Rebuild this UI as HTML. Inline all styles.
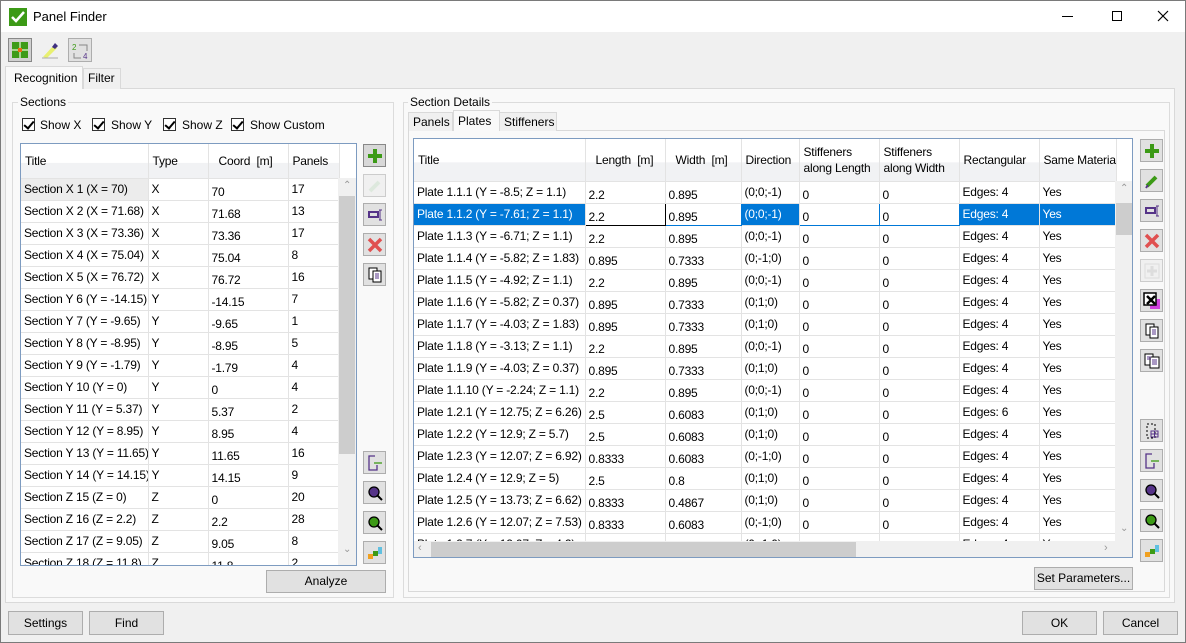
<!DOCTYPE html>
<html><head><meta charset="utf-8"><style>
*{box-sizing:border-box;margin:0;padding:0}
body{width:1186px;height:643px;overflow:hidden;background:#f0f0f0;font-family:"Liberation Sans",sans-serif;font-size:12px;color:#000;position:relative}
.a{position:absolute}
.title{position:absolute;left:0;top:0;width:1186px;height:32px;background:#fff;border:1px solid #7a7a7a;border-bottom:none}
.btn{position:absolute;background:#e1e1e1;border:1px solid #adadad;text-align:center;line-height:20px;font-size:12px}
.ib{position:absolute;width:23px;height:23px;background:#e1e1e1;border:1px solid #adadad}
.ib svg{position:absolute;left:2px;top:2px}
.grp{position:absolute;border:1px solid #dcdcdc}
.lbl{position:absolute;background:#f0f0f0;padding:0 2px}
table{border-collapse:collapse;table-layout:fixed;background:#fff}
td{border-right:1px solid #e3e3e3;border-bottom:1px solid #e3e3e3;height:22px;padding:0 0 0 3px;white-space:nowrap;overflow:hidden;vertical-align:middle;letter-spacing:-0.2px}
td.n{padding-top:5px}
th{font-weight:normal;text-align:left;padding-left:4px;border-right:1px solid #e3e3e3;border-bottom:1px solid #e3e3e3;background:linear-gradient(#fff 0,#fff 55%,#f1f2f4 56%,#f1f2f4 100%);white-space:nowrap;overflow:hidden;letter-spacing:-0.2px}
tr.sel td{background:#0078d7;color:#fff}
tr.sel td.ed{background:#fff;color:#000;border:1px solid #0078d7}
tr.sel td.ed1{background:#fff;color:#000;border:1px solid #000}
.cb{position:absolute;width:13px;height:13px;border:1px solid #333;background:#fff}
.cb:after{content:"";position:absolute;left:3px;top:0px;width:4px;height:8px;border:solid #000;border-width:0 2px 2px 0;transform:rotate(40deg)}
.vs{position:absolute;background:#f0f0f0}
.tab{position:absolute;border:1px solid #d9d9d9;border-bottom:none;background:#f0f0f0;padding-left:4px;line-height:18px}
</style></head><body>
<div class="title">
 <svg class="a" style="left:8px;top:7px" width="18" height="18"><rect width="18" height="18" fill="#3c9a16"/><path d="M3 9 L7 13 L15 4" stroke="#fff" stroke-width="2.5" fill="none"/></svg>
 <div class="a" style="left:32px;top:8px;font-size:13px">Panel Finder</div>
 <div class="a" style="left:1061px;top:15px;width:11px;border-top:1px solid #000"></div>
 <div class="a" style="left:1111px;top:10px;width:10px;height:10px;border:1px solid #000"></div>
 <svg class="a" style="left:1156px;top:9px" width="12" height="12"><path d="M1 1L11 11M11 1L1 11" stroke="#000" stroke-width="1.2"/></svg>
</div>
<div class="a" style="left:0;top:32px;width:1px;height:611px;background:#7a7a7a"></div>
<div class="a" style="left:1185px;top:32px;width:1px;height:611px;background:#7a7a7a"></div>
<div class="a" style="left:0;top:642px;width:1186px;height:1px;background:#7a7a7a"></div>

<div class="ib" style="left:8px;top:38px;width:24px;height:24px;background:#d0d0d0;border-color:#888"><svg width="18" height="18"><rect x="1" y="1" width="16" height="16" fill="#3c9a16"/><path d="M9 1V17M1 9H17" stroke="#c8e6b0" stroke-width="1.5"/><rect x="7" y="7" width="4" height="4" fill="#e86a10"/></svg></div>
<svg class="a" style="left:40px;top:40px" width="20" height="20"><path d="M3 17 L14 5 L17 8 L7 18Z" fill="#e8f070"/><path d="M12 7 L15 3 L18 6 L15 9Z" fill="#403080"/><path d="M2 18H18" stroke="#aaa"/></svg>
<div class="ib" style="left:68px;top:38px;width:24px;height:24px"><svg width="20" height="20"><text x="1" y="9" font-size="8" fill="#3c9a16" font-family="Liberation Sans">2</text><text x="12" y="18" font-size="8" fill="#553388" font-family="Liberation Sans">4</text><path d="M8 4H16V10M3 12V17H10" stroke="#888" fill="none"/></svg></div>

<div class="a" style="left:5px;top:88px;width:1170px;height:515px;border:1px solid #d9d9d9;background:#f9f9f9"></div>
<div class="tab" style="left:83px;top:68px;width:38px;height:21px;">Filter</div>
<div class="tab" style="left:5px;top:66px;width:78px;height:23px;background:#f9f9f9;border-color:#d9d9d9;line-height:22px;padding-left:8px">Recognition</div>

<div class="grp" style="left:12px;top:102px;width:382px;height:496px"></div>
<div class="lbl" style="left:18px;top:95px;background:#f9f9f9">Sections</div>
<div class="cb" style="left:22px;top:118px"></div><div class="a" style="left:40px;top:118px">Show X</div>
<div class="cb" style="left:92px;top:118px"></div><div class="a" style="left:111px;top:118px">Show Y</div>
<div class="cb" style="left:163px;top:118px"></div><div class="a" style="left:182px;top:118px">Show Z</div>
<div class="cb" style="left:231px;top:118px"></div><div class="a" style="left:250px;top:118px">Show Custom</div>

<div class="a" style="left:20px;top:143px;width:337px;height:423px;border:1px solid #7d9bc0;overflow:hidden;background:#fff">
<table style="width:318px">
<colgroup><col style="width:127px"><col style="width:60px"><col style="width:80px"><col style="width:51px"></colgroup>
<tr style="height:34px"><th>Title</th><th>Type</th><th style="padding-left:10px">Coord &nbsp;[m]</th><th>Panels</th></tr>
<tr><td style="background:#ececec">Section X 1 (X = 70)</td><td>X</td><td class="n">70</td><td>17</td></tr>
<tr><td>Section X 2 (X = 71.68)</td><td>X</td><td class="n">71.68</td><td>13</td></tr>
<tr><td>Section X 3 (X = 73.36)</td><td>X</td><td class="n">73.36</td><td>17</td></tr>
<tr><td>Section X 4 (X = 75.04)</td><td>X</td><td class="n">75.04</td><td>8</td></tr>
<tr><td>Section X 5 (X = 76.72)</td><td>X</td><td class="n">76.72</td><td>16</td></tr>
<tr><td>Section Y 6 (Y = -14.15)</td><td>Y</td><td class="n">-14.15</td><td>7</td></tr>
<tr><td>Section Y 7 (Y = -9.65)</td><td>Y</td><td class="n">-9.65</td><td>1</td></tr>
<tr><td>Section Y 8 (Y = -8.95)</td><td>Y</td><td class="n">-8.95</td><td>5</td></tr>
<tr><td>Section Y 9 (Y = -1.79)</td><td>Y</td><td class="n">-1.79</td><td>4</td></tr>
<tr><td>Section Y 10 (Y = 0)</td><td>Y</td><td class="n">0</td><td>4</td></tr>
<tr><td>Section Y 11 (Y = 5.37)</td><td>Y</td><td class="n">5.37</td><td>2</td></tr>
<tr><td>Section Y 12 (Y = 8.95)</td><td>Y</td><td class="n">8.95</td><td>4</td></tr>
<tr><td>Section Y 13 (Y = 11.65)</td><td>Y</td><td class="n">11.65</td><td>16</td></tr>
<tr><td>Section Y 14 (Y = 14.15)</td><td>Y</td><td class="n">14.15</td><td>9</td></tr>
<tr><td>Section Z 15 (Z = 0)</td><td>Z</td><td class="n">0</td><td>20</td></tr>
<tr><td>Section Z 16 (Z = 2.2)</td><td>Z</td><td class="n">2.2</td><td>28</td></tr>
<tr><td>Section Z 17 (Z = 9.05)</td><td>Z</td><td class="n">9.05</td><td>8</td></tr>
<tr><td>Section Z 18 (Z = 11.8)</td><td>Z</td><td class="n">11.8</td><td>2</td></tr>
</table>
<div class="vs" style="left:317px;top:34px;width:18px;height:388px"></div>
<div class="a" style="left:318px;top:52px;width:16px;height:258px;background:#cdcdcd"></div>
<div class="a" style="left:322px;top:36px;color:#999;font-size:10px">&#8963;</div>
<div class="a" style="left:322px;top:400px;color:#999;font-size:10px">&#8964;</div>
</div>

<div class="ib" style="left:363px;top:144px;background:#d8d8d8;border-color:#888"><svg width="18" height="18"><path d="M9 2V16M2 9H16" stroke="#3c9a16" stroke-width="4"/></svg></div>
<div class="ib" style="left:363px;top:174px;background:#f0f0f0;border-color:#ccc"><svg width="18" height="18"><path d="M4 14L13 5" stroke="#dde8dd" stroke-width="4"/></svg></div>
<div class="ib" style="left:363px;top:203px"><svg width="18" height="18"><rect x="3" y="6" width="9" height="5" fill="none" stroke="#553388" stroke-width="2"/><path d="M14 4V14M13 4H16M13 14H16" stroke="#553388"/></svg></div>
<div class="ib" style="left:363px;top:233px"><svg width="18" height="18"><path d="M3 3L15 15M15 3L3 15" stroke="#e05050" stroke-width="3.5"/></svg></div>
<div class="ib" style="left:363px;top:263px"><svg width="18" height="18"><rect x="3" y="2" width="8" height="11" fill="#fff" stroke="#000"/><rect x="7" y="5" width="8" height="11" fill="#fff" stroke="#000"/><path d="M9 8H13M9 10H13M9 12H13" stroke="#553388"/></svg></div>
<div class="ib" style="left:363px;top:451px"><svg width="18" height="18"><path d="M9 2H3V16H11V11" stroke="#553388" fill="none" stroke-width="1.3"/><path d="M8 9H16" stroke="#3c9a16" stroke-width="1.3"/></svg></div>
<div class="ib" style="left:363px;top:481px"><svg width="18" height="18"><circle cx="8" cy="8" r="5" fill="#553388" stroke="#000" stroke-width="1.3"/><path d="M11 11L16 16" stroke="#000" stroke-width="2"/></svg></div>
<div class="ib" style="left:363px;top:511px"><svg width="18" height="18"><circle cx="8" cy="8" r="5" fill="#3c9a16" stroke="#000" stroke-width="1.3"/><path d="M11 11L16 16" stroke="#000" stroke-width="2"/></svg></div>
<div class="ib" style="left:363px;top:541px"><svg width="18" height="18"><rect x="2" y="10" width="5" height="5" fill="#f0a020"/><rect x="7" y="7" width="5" height="5" fill="#3c9a16"/><rect x="12" y="3" width="4" height="7" fill="#60c0e0"/></svg></div>
<div class="btn" style="left:266px;top:570px;width:120px;height:23px;">Analyze</div>

<div class="grp" style="left:403px;top:102px;width:767px;height:496px"></div>
<div class="lbl" style="left:408px;top:95px;background:#f9f9f9">Section Details</div>
<div class="a" style="left:408px;top:130px;width:757px;height:462px;border:1px solid #d9d9d9"></div>
<div class="tab" style="left:408px;top:112px;width:45px;height:19px">Panels</div>
<div class="tab" style="left:499px;top:112px;width:58px;height:19px">Stiffeners</div>
<div class="tab" style="left:453px;top:110px;width:47px;height:21px;background:#f9f9f9;line-height:21px">Plates</div>

<div class="a" style="left:413px;top:138px;width:720px;height:420px;border:1px solid #7d9bc0;overflow:hidden;background:#fff">
<table style="width:702px">
<colgroup><col style="width:171px"><col style="width:80px"><col style="width:76px"><col style="width:58px"><col style="width:80px"><col style="width:80px"><col style="width:80px"><col style="width:77px"></colgroup>
<tr style="height:42px;line-height:16px"><th>Title</th><th style="padding-left:10px">Length &nbsp;[m]</th><th style="padding-left:10px">Width &nbsp;[m]</th><th>Direction</th><th>Stiffeners<br>along Length</th><th>Stiffeners<br>along Width</th><th>Rectangular</th><th>Same Material</th></tr>
<tr><td>Plate 1.1.1 (Y = -8.5; Z = 1.1)</td><td class="n">2.2</td><td class="n">0.895</td><td>(0;0;-1)</td><td class="n">0</td><td class="n">0</td><td>Edges: 4</td><td>Yes</td></tr>
<tr class="sel"><td>Plate 1.1.2 (Y = -7.61; Z = 1.1)</td><td class="n ed1">2.2</td><td class="n ed">0.895</td><td>(0;0;-1)</td><td class="n ed">0</td><td class="n ed">0</td><td>Edges: 4</td><td>Yes</td></tr>
<tr><td>Plate 1.1.3 (Y = -6.71; Z = 1.1)</td><td class="n">2.2</td><td class="n">0.895</td><td>(0;0;-1)</td><td class="n">0</td><td class="n">0</td><td>Edges: 4</td><td>Yes</td></tr>
<tr><td>Plate 1.1.4 (Y = -5.82; Z = 1.83)</td><td class="n">0.895</td><td class="n">0.7333</td><td>(0;-1;0)</td><td class="n">0</td><td class="n">0</td><td>Edges: 4</td><td>Yes</td></tr>
<tr><td>Plate 1.1.5 (Y = -4.92; Z = 1.1)</td><td class="n">2.2</td><td class="n">0.895</td><td>(0;0;-1)</td><td class="n">0</td><td class="n">0</td><td>Edges: 4</td><td>Yes</td></tr>
<tr><td>Plate 1.1.6 (Y = -5.82; Z = 0.37)</td><td class="n">0.895</td><td class="n">0.7333</td><td>(0;1;0)</td><td class="n">0</td><td class="n">0</td><td>Edges: 4</td><td>Yes</td></tr>
<tr><td>Plate 1.1.7 (Y = -4.03; Z = 1.83)</td><td class="n">0.895</td><td class="n">0.7333</td><td>(0;1;0)</td><td class="n">0</td><td class="n">0</td><td>Edges: 4</td><td>Yes</td></tr>
<tr><td>Plate 1.1.8 (Y = -3.13; Z = 1.1)</td><td class="n">2.2</td><td class="n">0.895</td><td>(0;0;-1)</td><td class="n">0</td><td class="n">0</td><td>Edges: 4</td><td>Yes</td></tr>
<tr><td>Plate 1.1.9 (Y = -4.03; Z = 0.37)</td><td class="n">0.895</td><td class="n">0.7333</td><td>(0;1;0)</td><td class="n">0</td><td class="n">0</td><td>Edges: 4</td><td>Yes</td></tr>
<tr><td>Plate 1.1.10 (Y = -2.24; Z = 1.1)</td><td class="n">2.2</td><td class="n">0.895</td><td>(0;0;-1)</td><td class="n">0</td><td class="n">0</td><td>Edges: 4</td><td>Yes</td></tr>
<tr><td>Plate 1.2.1 (Y = 12.75; Z = 6.26)</td><td class="n">2.5</td><td class="n">0.6083</td><td>(0;1;0)</td><td class="n">0</td><td class="n">0</td><td>Edges: 6</td><td>Yes</td></tr>
<tr><td>Plate 1.2.2 (Y = 12.9; Z = 5.7)</td><td class="n">2.5</td><td class="n">0.6083</td><td>(0;1;0)</td><td class="n">0</td><td class="n">0</td><td>Edges: 4</td><td>Yes</td></tr>
<tr><td>Plate 1.2.3 (Y = 12.07; Z = 6.92)</td><td class="n">0.8333</td><td class="n">0.6083</td><td>(0;-1;0)</td><td class="n">0</td><td class="n">0</td><td>Edges: 4</td><td>Yes</td></tr>
<tr><td>Plate 1.2.4 (Y = 12.9; Z = 5)</td><td class="n">2.5</td><td class="n">0.8</td><td>(0;1;0)</td><td class="n">0</td><td class="n">0</td><td>Edges: 4</td><td>Yes</td></tr>
<tr><td>Plate 1.2.5 (Y = 13.73; Z = 6.62)</td><td class="n">0.8333</td><td class="n">0.4867</td><td>(0;1;0)</td><td class="n">0</td><td class="n">0</td><td>Edges: 4</td><td>Yes</td></tr>
<tr><td>Plate 1.2.6 (Y = 12.07; Z = 7.53)</td><td class="n">0.8333</td><td class="n">0.6083</td><td>(0;-1;0)</td><td class="n">0</td><td class="n">0</td><td>Edges: 4</td><td>Yes</td></tr>
<tr><td>Plate 1.2.7 (Y = 12.07; Z = 4.2)</td><td class="n">0.8333</td><td class="n">0.6</td><td>(0;-1;0)</td><td class="n">0</td><td class="n">0</td><td>Edges: 4</td><td>Yes</td></tr>
</table>
<div class="vs" style="left:701px;top:42px;width:17px;height:361px"></div>
<div class="a" style="left:702px;top:64px;width:16px;height:32px;background:#cdcdcd"></div>
<div class="a" style="left:706px;top:44px;color:#999;font-size:10px">&#8963;</div>
<div class="a" style="left:706px;top:384px;color:#999;font-size:10px">&#8964;</div>
<div class="vs" style="left:0;top:402px;width:718px;height:17px"></div>
<div class="a" style="left:17px;top:403px;width:425px;height:15px;background:#cdcdcd"></div>
<div class="a" style="left:4px;top:403px;color:#999;font-size:11px">&lsaquo;</div>
<div class="a" style="left:690px;top:403px;color:#999;font-size:11px">&rsaquo;</div>
</div>

<div class="ib" style="left:1140px;top:139px"><svg width="18" height="18"><path d="M9 2V16M2 9H16" stroke="#3c9a16" stroke-width="4"/></svg></div>
<div class="ib" style="left:1140px;top:169px"><svg width="18" height="18"><path d="M4 14L13 5" stroke="#3c9a16" stroke-width="4"/><path d="M3 16L5 13" stroke="#553388" stroke-width="2"/></svg></div>
<div class="ib" style="left:1140px;top:199px"><svg width="18" height="18"><rect x="3" y="6" width="9" height="5" fill="none" stroke="#553388" stroke-width="2"/><path d="M14 4V14M13 4H16M13 14H16" stroke="#553388"/></svg></div>
<div class="ib" style="left:1140px;top:229px"><svg width="18" height="18"><path d="M3 3L15 15M15 3L3 15" stroke="#e05050" stroke-width="3.5"/></svg></div>
<div class="ib" style="left:1140px;top:259px;background:#f0f0f0;border-color:#ccc"><svg width="18" height="18"><rect x="2" y="2" width="14" height="14" fill="none" stroke="#ddd"/><path d="M9 4V14M4 9H14" stroke="#ddd" stroke-width="3"/></svg></div>
<div class="ib" style="left:1140px;top:289px"><svg width="18" height="18"><rect x="7" y="7" width="10" height="10" fill="#d040e0"/><rect x="1" y="1" width="12" height="12" fill="#fff" stroke="#000" stroke-width="1.5"/><path d="M4 4L12 12M12 4L4 12" stroke="#000" stroke-width="2.5"/></svg></div>
<div class="ib" style="left:1140px;top:319px"><svg width="18" height="18"><rect x="3" y="2" width="8" height="11" fill="#fff" stroke="#000"/><rect x="7" y="5" width="8" height="11" fill="#fff" stroke="#000"/><path d="M9 8H13M9 10H13M9 12H13" stroke="#553388"/></svg></div>
<div class="ib" style="left:1140px;top:349px"><svg width="18" height="18"><rect x="2" y="2" width="8" height="11" fill="#fff" stroke="#000"/><rect x="7" y="5" width="9" height="11" fill="#fff" stroke="#000"/><path d="M4 5H8M4 7H8M9 8H14M9 10H14M9 12H14" stroke="#553388"/></svg></div>
<div class="ib" style="left:1140px;top:419px"><svg width="18" height="18"><rect x="4" y="2" width="8" height="14" fill="none" stroke="#000" stroke-dasharray="2 2"/><rect x="8" y="9" width="7" height="6" fill="none" stroke="#553388"/><path d="M11.5 9V15M8 12H15" stroke="#553388"/></svg></div>
<div class="ib" style="left:1140px;top:449px"><svg width="18" height="18"><path d="M9 2H3V16H11V11" stroke="#553388" fill="none" stroke-width="1.3"/><path d="M8 9H16" stroke="#3c9a16" stroke-width="1.3"/></svg></div>
<div class="ib" style="left:1140px;top:479px"><svg width="18" height="18"><circle cx="8" cy="8" r="5" fill="#553388" stroke="#000" stroke-width="1.3"/><path d="M11 11L16 16" stroke="#000" stroke-width="2"/></svg></div>
<div class="ib" style="left:1140px;top:509px"><svg width="18" height="18"><circle cx="8" cy="8" r="5" fill="#3c9a16" stroke="#000" stroke-width="1.3"/><path d="M11 11L16 16" stroke="#000" stroke-width="2"/></svg></div>
<div class="ib" style="left:1140px;top:539px"><svg width="18" height="18"><rect x="2" y="10" width="5" height="5" fill="#f0a020"/><rect x="7" y="7" width="5" height="5" fill="#3c9a16"/><rect x="12" y="3" width="4" height="7" fill="#60c0e0"/></svg></div>
<div class="btn" style="left:1034px;top:567px;width:99px;height:23px;">Set Parameters...</div>

<div class="btn" style="left:8px;top:611px;width:75px;height:24px;line-height:22px">Settings</div>
<div class="btn" style="left:89px;top:611px;width:75px;height:24px;line-height:22px">Find</div>
<div class="btn" style="left:1022px;top:611px;width:75px;height:24px;line-height:22px">OK</div>
<div class="btn" style="left:1103px;top:611px;width:75px;height:24px;line-height:22px">Cancel</div>
</body></html>
